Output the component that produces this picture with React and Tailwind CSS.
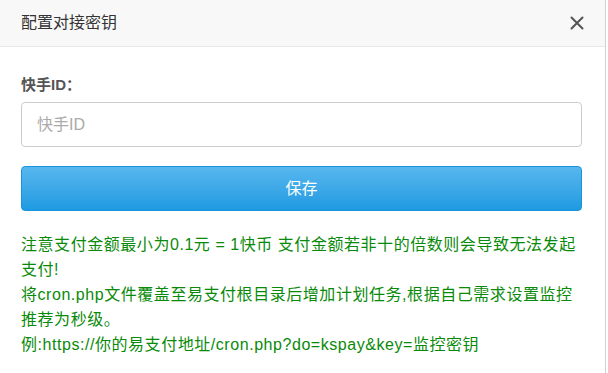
import React from "react";

const font = { fontFamily: '"Liberation Sans", "Noto Sans CJK SC", sans-serif' };

const App = () => {
  return (
    <div className="w-[608px] h-[373px] bg-white" style={font}>
      <div className="w-[606px] h-full border-r border-[#d0d0d0] bg-white">
        {/* header */}
        <div className="h-[47px] bg-[#f8f8f8] border-b border-[#e8e8e8] flex items-center justify-between pl-[21px] pr-[20px]">
          <span className="text-[16px] text-[#333]">配置对接密钥</span>
          <svg width="16" height="16" viewBox="0 0 16 16" className="text-[#555]">
            <path d="M2.5 2.5 L13.5 13.5 M13.5 2.5 L2.5 13.5" stroke="currentColor" strokeWidth="2" strokeLinecap="round" />
          </svg>
        </div>

        {/* body */}
        <div className="px-[21px] pt-[28px]">
          <label className="block text-[15px] font-bold text-[#555] leading-[20px]">快手ID：</label>
          <input
            className="mt-[7px] w-[561px] h-[45px] border border-[#ccc] rounded-[4px] px-[15px] text-[16px] text-[#333] placeholder:text-[#aaa] outline-none"
            placeholder="快手ID"
          />
          <button className="mt-[19px] w-[561px] h-[45px] rounded-[4px] border border-[#1b93da] bg-gradient-to-b from-[#56b7ee] to-[#1c9ae1] text-white text-[16px]">
            保存
          </button>
          <div className="mt-[21px] text-[16px] leading-[25px] tracking-[0.55px] text-[#0a8a0a] whitespace-nowrap">
            <p>
              注意支付金额最小为0.1元 = 1快币 支付金额若非十的倍数则会导致无法发起
              <br />
              支付!
            </p>
            <p>
              将cron.php文件覆盖至易支付根目录后增加计划任务,根据自己需求设置监控
              <br />
              推荐为秒级。
            </p>
            <p>例:https://你的易支付地址/cron.php?do=kspay&amp;key=监控密钥</p>
          </div>
        </div>
      </div>
    </div>
  );
};

export default App;
